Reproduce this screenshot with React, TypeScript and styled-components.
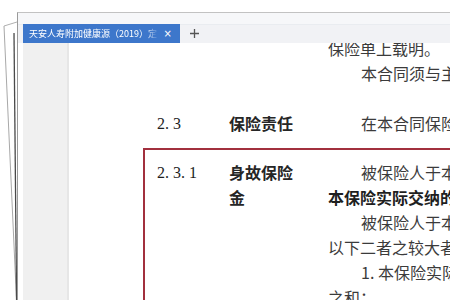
import React from 'react';
import styled, { createGlobalStyle } from 'styled-components';

const GlobalStyle = createGlobalStyle`
  html, body {
    margin: 0;
    padding: 0;
    background: #ffffff;
    overflow: hidden;
  }
  body {
    width: 450px;
    height: 300px;
    font-family: "Noto Sans CJK SC", "Noto Sans", sans-serif;
  }
`;

const Desk = styled.div`
  position: relative;
  width: 450px;
  height: 300px;
  padding: 12px 0 0 17px;
  box-sizing: border-box;
  overflow: hidden;
`;

const BackSheets = styled.svg`
  position: absolute;
  left: 0;
  top: 0;
`;

const Window = styled.div`
  position: relative;
  display: flex;
  flex-direction: column;
  height: 100%;
  border-top: 1px solid #c2c2c2;
  border-left: 1px solid #9a9a9a;
  background: #ffffff;
`;

const TabStrip = styled.div`
  display: flex;
  align-items: flex-end;
  gap: 10px;
  height: 30px;
  padding-left: 5px;
  background: linear-gradient(#f6f7f9 0 11px, #e9ecf0 11px 12px, #f1f2f5 12px);
`;

const Tab = styled.div`
  display: flex;
  align-items: center;
  height: 19px;
  width: 157px;
  box-sizing: border-box;
  padding: 0 8px 0 6px;
  background: #3d77cb;
  color: #ffffff;
  font-size: 9px;
`;

const TabTitle = styled.span`
  flex: 1;
  white-space: nowrap;
  overflow: hidden;
  -webkit-mask-image: linear-gradient(90deg, #000 0 88%, rgba(0, 0, 0, 0.3) 94%, transparent);
  mask-image: linear-gradient(90deg, #000 0 88%, rgba(0, 0, 0, 0.3) 94%, transparent);
`;

const TabClose = styled.span`
  margin-left: 2px;
  font-family: "DejaVu Sans", sans-serif;
  font-size: 10px;
  line-height: 1;
`;

const NewTab = styled.svg`
  margin-bottom: 5px;
`;

const Body = styled.div`
  flex: 1;
  display: flex;
  min-height: 0;
  padding-left: 5px;
`;

const SidePane = styled.div`
  width: 44px;
  background: #f0f0f0;
  border-right: 2px solid #e6e6e6;
`;

const DocView = styled.div`
  flex: 1;
  overflow: hidden;
  background: #ffffff;
`;

const Sheet = styled.div`
  width: 640px;
  margin-top: -7px;
  padding-left: 74px;
  font-size: 16px;
  line-height: 25px;
  color: #3b3b3b;
`;

const Clause = styled.div<{ $boxed?: boolean; $gapBefore?: number }>`
  display: grid;
  grid-template-columns: 72px 99px 1fr;
  margin-top: ${p => p.$gapBefore ?? 0}px;
  padding: ${p => (p.$boxed ? '10px 0 20px 12px' : '0 0 0 14px')};
  border: ${p => (p.$boxed ? '2px solid #a2303e' : 'none')};
`;

const Num = styled.div`
  font-family: "Liberation Serif", "DejaVu Serif", serif;
  color: #1e1e1e;
  white-space: pre;
`;

const Title = styled.div`
  width: 64px;
  font-weight: 700;
  color: #262626;
`;

const Text = styled.div``;

const Line = styled.div<{ $indent?: boolean; $bold?: boolean }>`
  white-space: nowrap;
  padding-left: ${p => (p.$indent ? '33px' : '0')};
  font-weight: ${p => (p.$bold ? 700 : 400)};
  color: ${p => (p.$bold ? '#1f1f1f' : '#3b3b3b')};
`;

type TextLine = { text: string; indent?: boolean; bold?: boolean };

const Lines: React.FC<{ lines: TextLine[] }> = ({ lines }) => (
  <Text>
    {lines.map((l, i) => (
      <Line key={i} $indent={l.indent} $bold={l.bold}>
        {l.text}
      </Line>
    ))}
  </Text>
);

const deathBenefit: TextLine[] = [
  { text: '被保险人于本合同生效（或最后复效）之日起180日内因疾病导致身故，本公司按', indent: true },
  { text: '本保险实际交纳的保险费给付身故保险金，本合同终止。', bold: true },
  { text: '被保险人于本合同生效（或最后复效）之日起180日后因疾病导致身故，本公司按', indent: true },
  { text: '以下二者之较大者给付身故保险金，本合同终止：' },
  { text: '1. 本保险实际交纳的保险费与按日计算的保险费', indent: true },
  { text: '之和；' },
];

const App: React.FC = () => {
  return (
    <>
      <GlobalStyle />
      <Desk>
        <BackSheets width="20" height="300" viewBox="0 0 20 300">
          <path d="M4 26 L17 22 L17 300 L16 300 Z" fill="#ffffff" />
          <path d="M4 26 L17 22" stroke="#b0b0b0" strokeWidth="1" fill="none" />
          <path d="M4 26 L16.5 300" stroke="#a8a8a8" strokeWidth="1" fill="none" />
          <path d="M14 33 L16.6 300" stroke="#4a4a4a" strokeWidth="1.3" fill="none" />
        </BackSheets>
        <Window>
          <TabStrip>
            <Tab>
              <TabTitle>天安人寿附加健康源（2019）定</TabTitle>
              <TabClose>×</TabClose>
            </Tab>
            <NewTab width="9" height="9" viewBox="0 0 9 9">
              <path d="M4.5 0 V9 M0 4.5 H9" stroke="#555" strokeWidth="1.3" />
            </NewTab>
          </TabStrip>
          <Body>
            <SidePane />
            <DocView>
              <Sheet>
                <Clause>
                  <Num />
                  <Title />
                  <Lines
                    lines={[
                      { text: '保险单上载明。' },
                      { text: '本合同须与主合同一同投保，不得单独投保。', indent: true },
                    ]}
                  />
                </Clause>
                <Clause $gapBefore={25}>
                  <Num>2. 3</Num>
                  <Title>保险责任</Title>
                  <Lines
                    lines={[{ text: '在本合同保险期间内，本公司承担下列保险责任：', indent: true }]}
                  />
                </Clause>
                <Clause $boxed $gapBefore={12}>
                  <Num>2. 3. 1</Num>
                  <Title>身故保险金</Title>
                  <Lines lines={deathBenefit} />
                </Clause>
              </Sheet>
            </DocView>
          </Body>
        </Window>
      </Desk>
    </>
  );
};

export default App;
